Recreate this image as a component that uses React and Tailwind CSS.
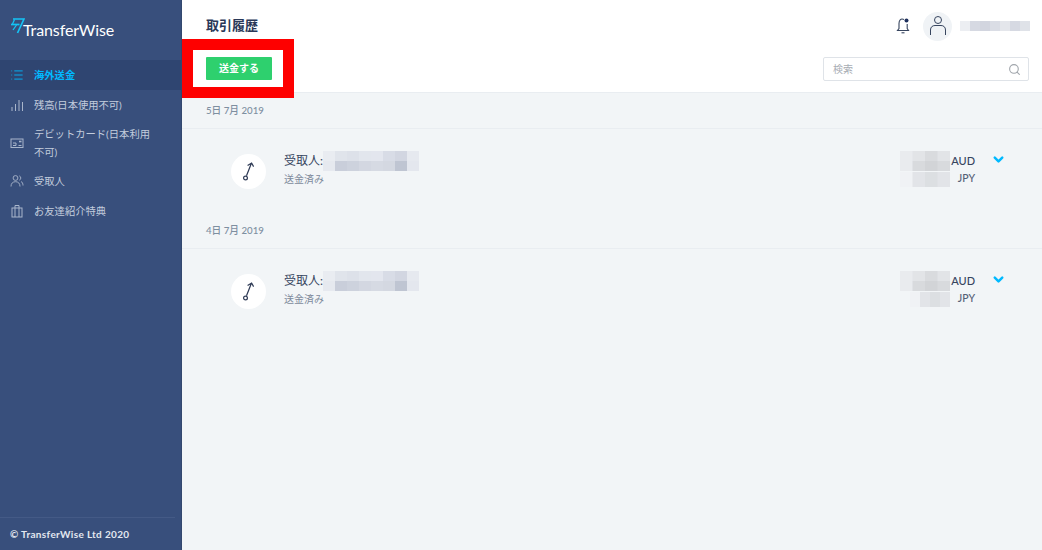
import React from 'react';
import { ChevronDown, List, Search } from 'lucide-react';

// mosaic used for the censored names and amounts
function Mosaic({ cols, rows, cell, colors, className = '' }) {
    return (
        <svg width={cols * cell[0]} height={rows * cell[1]} className={'block blur-[0.6px] ' + className}>
            {colors.map((c, i) => (
                <rect
                    key={i}
                    x={(i % cols) * cell[0]}
                    y={Math.floor(i / cols) * cell[1]}
                    width={cell[0] + 0.5}
                    height={cell[1] + 0.5}
                    fill={c}
                />
            ))}
        </svg>
    );
}

const nameColors = [
    '#e9ecf1', '#e0e4eb', '#dde1e9', '#e2e6ed', '#e3e6ee', '#d8dce6', '#d2d6e1', '#e6e9ef',
    '#e6e9ef', '#c9ceda', '#cdd2dd', '#d3d7e1', '#d6dae3', '#d4d8e1', '#bfc5d2', '#e4e7ee',
];

const amountColors = [
    '#e9ebee', '#e2e4e7', '#d9dbde', '#e2e4e7',
    '#e9ebee', '#d8dadd', '#d2d4d7', '#d8dadd',
];

const jpyColors = ['#f0f2f5', '#e2e4e8', '#dcdfe2', '#e2e4e8'];

function BarsIcon() {
    return (
        <svg width="14" height="14" viewBox="0 0 14 14" stroke="currentColor" strokeWidth="1" fill="none">
            <path d="M2 13V9M5.5 13V6M9 13V2M12.5 13V4" />
        </svg>
    );
}

function CardIcon() {
    return (
        <svg width="14" height="14" viewBox="0 0 14 14" stroke="currentColor" strokeWidth="1" fill="none">
            <rect x="1" y="3" width="12" height="8.5" />
            <path d="M3 7h3v2.5H3M8.5 9.5h3" />
            <path d="M9 5.5h2.5" strokeWidth="1.6" />
        </svg>
    );
}

function PeopleIcon() {
    return (
        <svg width="14" height="14" viewBox="0 0 14 14" stroke="currentColor" strokeWidth="0.9" fill="none">
            <circle cx="5.5" cy="4" r="2.4" />
            <path d="M1 12.5c0-3.2 1.800-4.800 4.500-4.800s4.500 1.600 4.500 4.800" />
            <path d="M9.300 1.900a2.300 2.300 0 0 1 0 4.300M11 7.500c1.300.6 2 2 2 4" />
        </svg>
    );
}

function BoxIcon() {
    return (
        <svg width="14" height="14" viewBox="0 0 14 14" stroke="currentColor" strokeWidth="1" fill="none">
            <rect x="2" y="4" width="10" height="9" />
            <path d="M5 1.500v11.500M9 1.500v11.500M5 1.500h4" />
        </svg>
    );
}

function NavItem({ icon, active, children }) {
    return (
        <div
            className={
                'flex items-center pl-[10px] pr-[27px] ' +
                (active ? 'h-[30px] bg-[#2f4571] text-[#00b9ff] font-bold' : 'text-[#c3cddd]')
            }
        >
            <span className={'w-[24px] shrink-0 ' + (active ? 'text-[#00b9ff]' : 'text-[#a9b6cb]')}>{icon}</span>
            <span className="text-[10.3px] leading-[18px]">{children}</span>
        </div>
    );
}

function TransferIcon() {
    return (
        <div className="w-[35px] h-[35px] rounded-full bg-white flex items-center justify-center shrink-0">
            <svg width="14" height="20" viewBox="0 0 14 20" fill="none" stroke="#2e3a55" strokeWidth="1.2">
                <circle cx="3.500" cy="17" r="1.900" />
                <path d="M4.500 14.800 9.300 2.500M5.600 4.600 9.600 2l2 3.600" />
            </svg>
        </div>
    );
}

function Transfer({ date, jpyCols }) {
    return (
        <div>
            <div className="h-[36px] flex items-center pl-[24px] border-b border-[#e9edf1] text-[9.7px] font-medium text-[#7e8fa1]">
                {date}
            </div>
            <div className="h-[84px] flex items-center pl-[49px] pr-[36px]">
                <TransferIcon />
                <div className="ml-[18px] mb-[4px] flex flex-col">
                    <div className="flex items-center h-[20px]">
                        <span className="text-[12px] text-[#37455f]">受取人:</span>
                        <Mosaic cols={8} rows={2} cell={[12, 10]} colors={nameColors} />
                    </div>
                    <span className="text-[10px] leading-[16px] text-[#7d8a9b]">送金済み</span>
                </div>
                <div className="ml-auto mb-[4px] flex flex-col items-end">
                    <div className="flex items-center h-[20px]">
                        <Mosaic cols={4} rows={2} cell={[12.5, 10]} colors={amountColors} />
                        <span className="w-[25px] text-right text-[11px] font-medium text-[#37455f]">AUD</span>
                    </div>
                    <div className="flex items-center h-[16px]">
                        <Mosaic cols={4} rows={1} cell={[jpyCols, 15]} colors={jpyColors} />
                        <span className="w-[25px] text-right text-[10.5px] font-medium text-[#556176]">JPY</span>
                    </div>
                </div>
                <ChevronDown size={15} strokeWidth={4} className="text-[#00b9ff] ml-[16px] -mt-[23px]" />
            </div>
        </div>
    );
}

export default function App() {
    return (
        <div
            className="relative flex w-[1042px] h-[550px] overflow-hidden bg-[#f2f5f7]"
            style={{ fontFamily: 'Lato, "Noto Sans CJK JP", sans-serif' }}
        >
            <aside className="w-[182px] shrink-0 bg-[#384f7c] border-r border-[#33486f] flex flex-col">
                <div className="h-[60px] pl-[10px] pt-[17px] flex items-start text-white">
                    <svg width="15" height="17" viewBox="0 0 15 17" fill="none" stroke="#14c4f5" strokeWidth="1.700">
                        <path d="M3 2h11L7.500 16" />
                        <path d="M1 7.500h8.500" />
                        <path d="M4.500 2.500 2.500 7M6.500 8 3 13" strokeWidth="1.300" />
                    </svg>
                    <span className="text-[16px] leading-[22px] mt-[2px] -ml-[2px] font-normal tracking-[-0.1px]">TransferWise</span>
                </div>
                <NavItem active icon={<List size={14} strokeWidth={1.5} />}>海外送金</NavItem>
                <div className="flex flex-col">
                    <div className="h-[30px] flex flex-col justify-center">
                        <NavItem icon={<BarsIcon />}>残高(日本使用不可)</NavItem>
                    </div>
                    <div className="h-[46px] flex flex-col justify-center">
                        <NavItem icon={<CardIcon />}>デビットカード(日本利用不可)</NavItem>
                    </div>
                    <div className="h-[30px] flex flex-col justify-center">
                        <NavItem icon={<PeopleIcon />}>受取人</NavItem>
                    </div>
                    <div className="h-[30px] flex flex-col justify-center">
                        <NavItem icon={<BoxIcon />}>お友達紹介特典</NavItem>
                    </div>
                </div>
                <div className="mt-auto mr-[6px] border-t border-[#445a86] h-[33px] flex items-center pl-[10px]">
                    <span className="text-[10px] font-bold text-[#e3e8f0] tracking-[0.35px]">© TransferWise Ltd 2020</span>
                </div>
            </aside>

            <main className="flex-1 min-w-0 flex flex-col">
                <header className="h-[93px] bg-white border-b border-[#e9edf1] shrink-0 flex flex-col">
                    <div className="h-[52px] flex items-center pl-[24px] pr-[12px]">
                        <h1 className="text-[13px] font-bold text-[#2a3858]">取引履歴</h1>
                        <div className="ml-auto flex items-center">
                            <svg width="14" height="18" viewBox="0 0 14 18" fill="none" stroke="#37455f" strokeWidth="1.100" className="mr-[13px]">
                                <path d="M8 2.500C4.500 1 3 3.500 3 6.500v5l-1.500 2h11l-1.300-2V7" />
                                <path d="M5.500 15.800h3" />
                                <circle cx="10.500" cy="3.500" r="2" fill="#1d2f5c" stroke="none" />
                            </svg>
                            <div className="w-[29px] h-[29px] rounded-full bg-[#f0f3f6] flex items-center justify-center mr-[8px]">
                                <svg width="18" height="22" viewBox="0 0 18 22" fill="none" stroke="#37455f" strokeWidth="1">
                                    <circle cx="9" cy="5" r="3.500" />
                                    <path d="M1.500 20v-5c0-3 2-4.500 4.500-4.500h6c2.500 0 4.500 1.500 4.500 4.500v5" />
                                </svg>
                            </div>
                            <Mosaic cols={7} rows={1} cell={[10, 10]} colors={['#eceef2', '#d6d9e2', '#d2d5df', '#dadde5', '#e4e6eb', '#d6d9e2', '#dfe2e8']} />
                        </div>
                    </div>
                    <div className="flex items-start justify-between pl-[24px] pr-[13px] pt-[5px]">
                        <button className="w-[66px] h-[23px] bg-[#2ed06e] text-white text-[10px] font-bold rounded-[1px]">
                            送金する
                        </button>
                        <div className="w-[206px] h-[24px] bg-white border border-[#dfe3e8] rounded-[2px] flex items-center justify-between pl-[9px] pr-[7px]">
                            <span className="text-[10px] text-[#a8adb4]">検索</span>
                            <Search size={13} strokeWidth={2} className="text-[#a0a5ab]" />
                        </div>
                    </div>
                </header>
                <Transfer date="5日 7月 2019" jpyCols={12.5} />
                <Transfer date="4日 7月 2019" jpyCols={10} />
            </main>

            {/* red highlight drawn over the screenshot */}
            <div className="absolute left-[182px] top-[39px] w-[112px] h-[59px] border-[11px] border-[#fe0000]" />
        </div>
    );
}
